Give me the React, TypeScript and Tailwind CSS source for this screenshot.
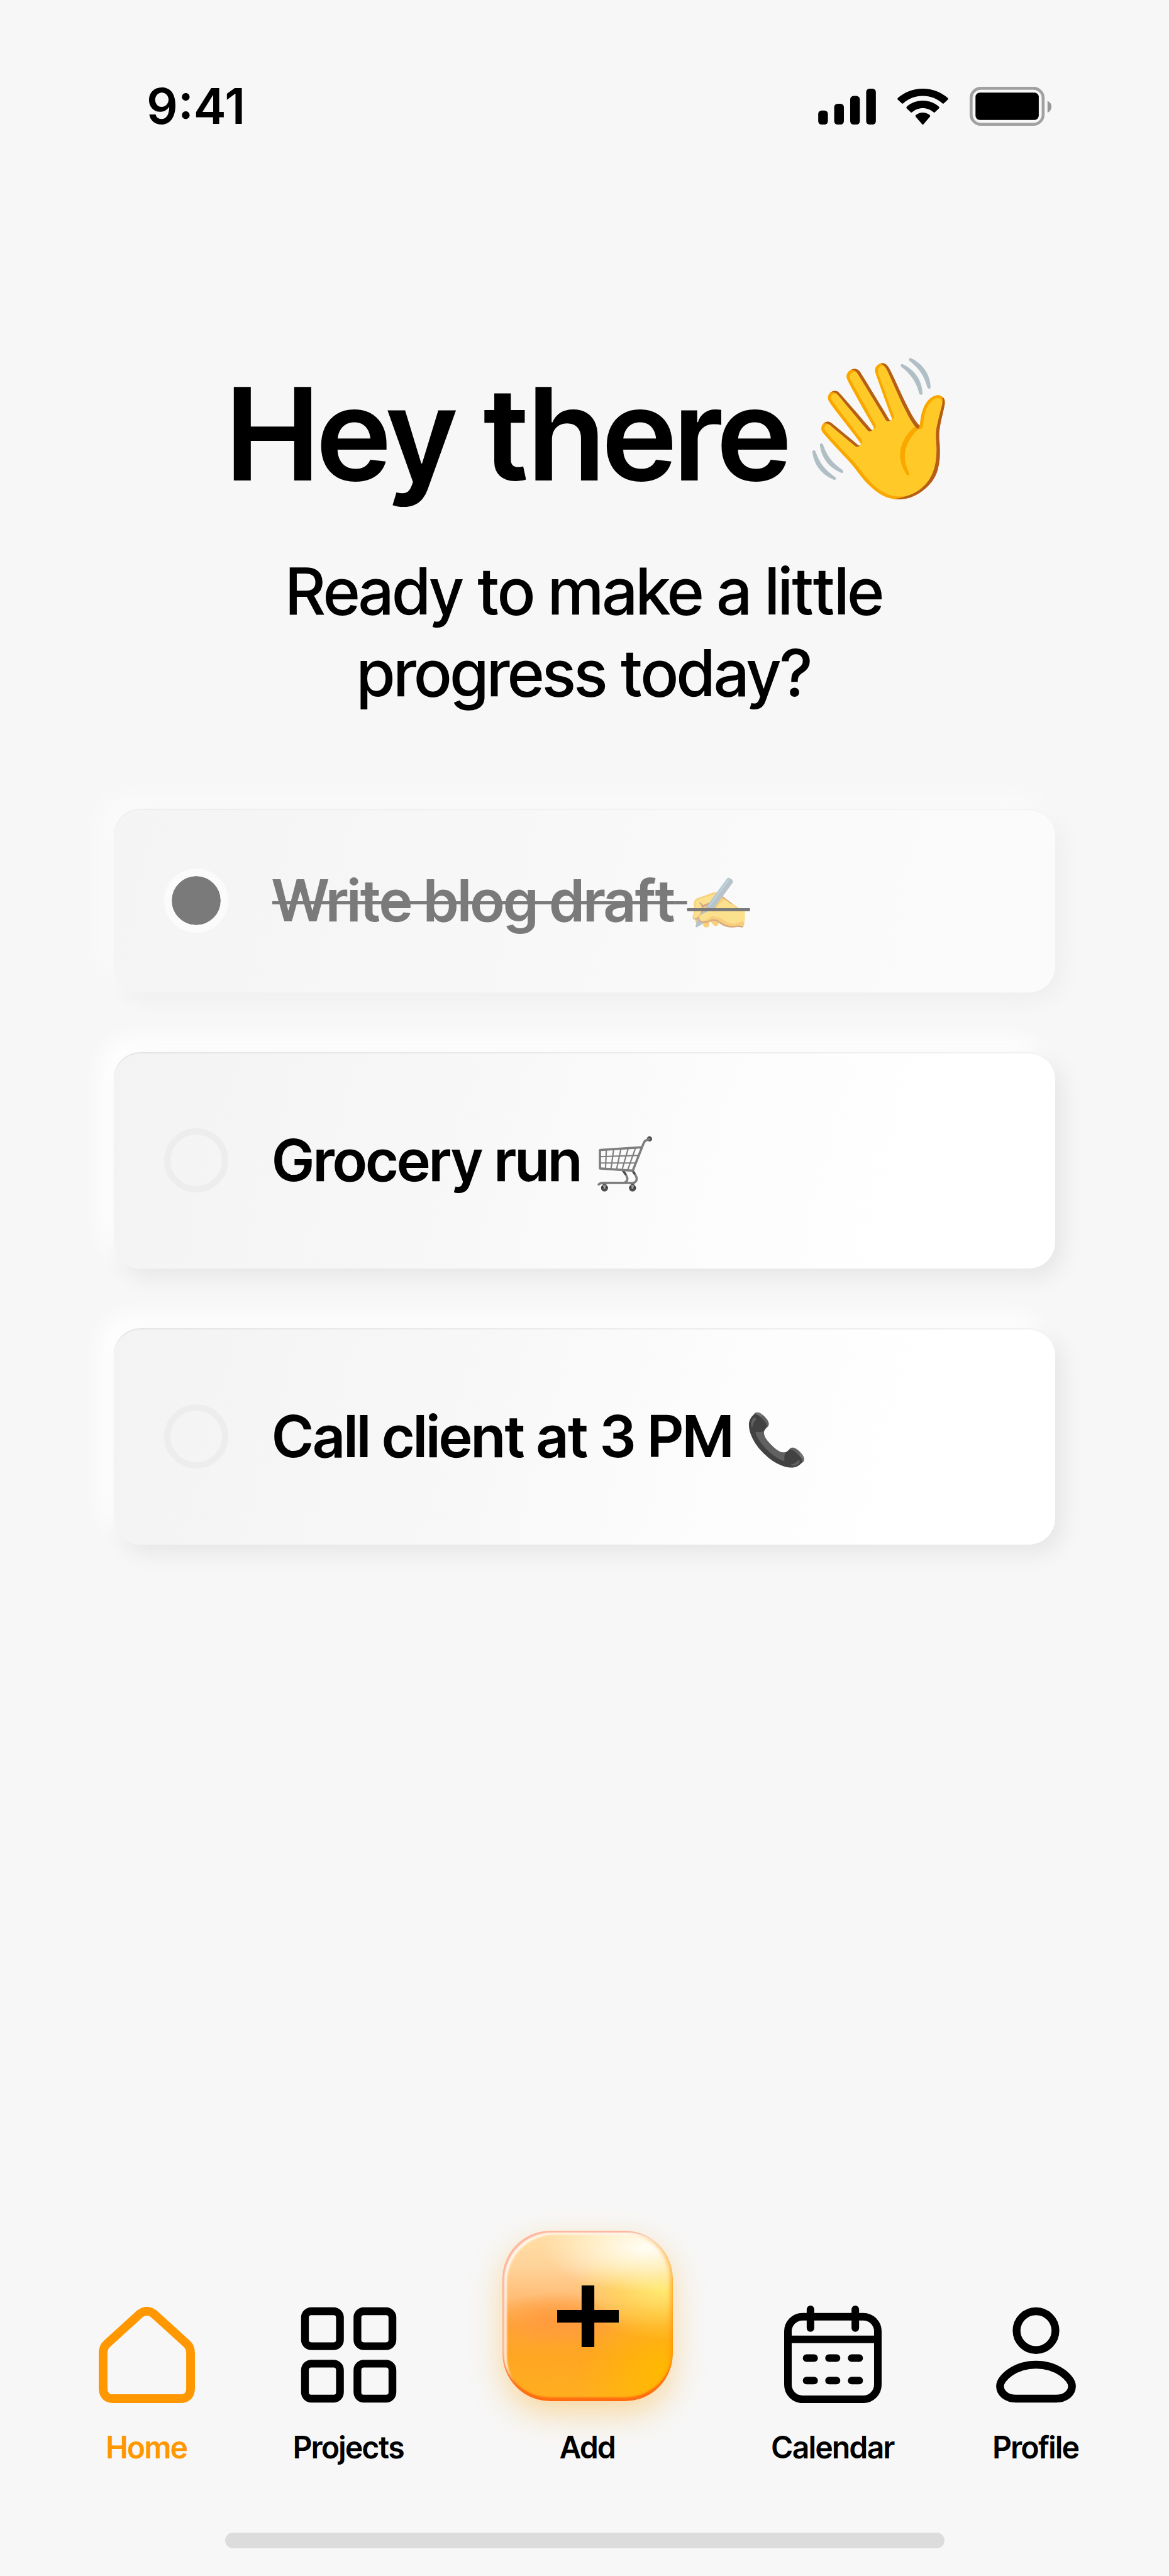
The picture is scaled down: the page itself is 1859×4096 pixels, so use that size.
import { useState } from 'react';
import type { ReactNode } from 'react';
import clsx from 'clsx';

type Task = {
  id: string;
  title: string;
  emoji: string;
  done: boolean;
  mono?: boolean;
};

const initialTasks: Task[] = [
  { id: 'blog', title: 'Write blog draft', emoji: '✍️', done: true },
  { id: 'grocery', title: 'Grocery run', emoji: '🛒', done: false, mono: true },
  { id: 'client', title: 'Call client at 3 PM', emoji: '📞', done: false },
];

const SignalIcon = () => (
  <svg viewBox="0 0 119 74" className="h-[57px] w-[92px]" fill="currentColor" aria-hidden="true">
    <rect x="0" y="45" width="20" height="29" rx="7" />
    <rect x="33" y="31" width="20" height="43" rx="7" />
    <rect x="66" y="15" width="20" height="59" rx="7" />
    <rect x="99" y="0" width="20" height="74" rx="7" />
  </svg>
);

const WifiIcon = () => (
  <svg viewBox="0 0 105 74" className="h-[57px] w-[81px]" fill="currentColor" aria-hidden="true">
    <path d="M52.5 0C32.5 0 14.5 7.3 1 19.3Q-.6 20.8 .9 22.6L9 30.2Q10.5 31.6 12.2 30.2C23 20.6 37 15 52.5 15S82 20.6 92.8 30.2Q94.5 31.6 96 30.2L104.1 22.6Q105.6 20.8 104 19.3C90.5 7.3 72.5 0 52.5 0Z" />
    <path d="M52.5 24.7C39.5 24.7 28 29.5 19.2 37.2Q17.6 38.8 19.1 40.6L27.2 48.5Q28.9 50 30.6 48.5C36.5 43.3 44 40.2 52.5 40.2S68.5 43.3 74.4 48.5Q76.1 50 77.8 48.5L85.9 40.6Q87.4 38.8 85.8 37.2C77 29.5 65.5 24.7 52.5 24.7Z" />
    <path d="M52.5 49.2C46.5 49.2 41.5 51.3 38 54.6Q36.5 56.3 38 58L51 73.2Q52.5 74.6 54 73.2L67 58Q68.5 56.3 67 54.6C63.5 51.3 58.5 49.2 52.5 49.2Z" />
  </svg>
);

const BatteryIcon = () => (
  <svg viewBox="0 0 168 80" className="h-[62px] w-[130px]" aria-hidden="true">
    <rect x="3" y="3" width="148" height="74" rx="20" fill="none" stroke="#a1a1a1" strokeWidth="6" />
    <rect x="12" y="12" width="130" height="56" rx="9" fill="#000" />
    <path d="M160 29C165 31 168 35 168 41S165 51 160 53Z" fill="#969696" />
  </svg>
);

const HomeIcon = () => (
  <svg viewBox="0 0 198 198" className="size-[153px]" fill="none" stroke="currentColor" strokeWidth="18" aria-hidden="true">
    <path d="M9 95Q9 83 17 76L85 14Q99 4 113 14L181 76Q189 83 189 95V167Q189 189 167 189H31Q9 189 9 167Z" />
  </svg>
);

const ProjectsIcon = () => (
  <svg viewBox="0 0 198 198" className="size-[153px]" fill="none" stroke="currentColor" strokeWidth="16" aria-hidden="true">
    <rect x="9" y="9" width="72" height="72" rx="13" />
    <rect x="117" y="9" width="72" height="72" rx="13" />
    <rect x="9" y="117" width="72" height="72" rx="13" />
    <rect x="117" y="117" width="72" height="72" rx="13" />
  </svg>
);

const CalendarIcon = () => (
  <svg viewBox="0 0 200 200" className="size-[155px]" fill="none" stroke="currentColor" strokeWidth="15.5" strokeLinecap="round" aria-hidden="true">
    <rect x="7.75" y="22.75" width="184.5" height="169.5" rx="30" />
    <path d="M8 69.5H192" />
    <path d="M54 7.75V46M146 7.75V46" />
    <path d="M46 107.75H61.5M92 107.75H107.5M138.5 107.75H154" />
    <path d="M46 154H61.5M92 154H107.5M138.5 154H154" />
  </svg>
);

const ProfileIcon = () => (
  <svg viewBox="0 0 164 198" className="h-[153px] w-[127px]" fill="none" stroke="currentColor" strokeWidth="16" aria-hidden="true">
    <circle cx="82" cy="49" r="40" />
    <path d="M82 119C38 119 8 147 8 163C8 178 22 189 41 189H123C142 189 156 178 156 163C156 147 126 119 82 119Z" />
  </svg>
);

const PlusIcon = () => (
  <svg viewBox="0 0 126 126" className="size-[98px]" stroke="#000" strokeWidth="26" aria-hidden="true">
    <path d="M0 63H126M63 0V126" />
  </svg>
);

const NavItem = ({ label, icon, active }: { label: string; icon: ReactNode; active?: boolean }) => (
  <a
    href={`#${label.toLowerCase()}`}
    aria-current={active ? 'page' : undefined}
    className={clsx('flex flex-col items-center gap-[43px]', active ? 'text-[#ff9800]' : 'text-black')}
  >
    {icon}
    <span className="text-[48px] leading-[56px] font-semibold">{label}</span>
  </a>
);

export default function App() {
  const [tasks, setTasks] = useState(initialTasks);

  const toggle = (id: string) => {
    setTasks(tasks.map(t => (t.id === id ? { ...t, done: !t.done } : t)));
  };

  return (
    <div className="flex min-h-screen flex-col bg-[#f7f7f7] font-['Inter_Tight','Inter',sans-serif] text-black">
      {/* Status bar */}
      <header className="flex items-center justify-between pt-[119px] pr-[187px] pl-[233px]">
        <time className="font-['Inter',sans-serif] text-[78px] leading-[100px] font-semibold">9:41</time>
        <div className="flex items-center gap-[34px]">
          <SignalIcon />
          <WifiIcon />
          <BatteryIcon />
        </div>
      </header>

      <main className="flex flex-col pt-[345px]">
        <h1 className="flex items-start justify-center gap-[12px] pl-[40px] text-[205px] leading-[250px] font-semibold">
          Hey there
          <span className="text-[217px] leading-[230px]">👋</span>
        </h1>
        <p className="mt-[61px] text-center text-[102px] leading-[130px] font-medium">
          Ready to make a little
          <br />
          progress today?
        </p>

        {/* Tasks */}
        <ul className="mt-[151px] flex flex-col gap-[95px] px-[181px]">
          {tasks.map(task => (
            <li
              key={task.id}
              className={clsx(
                'rounded-[42px] bg-linear-[105deg,#f3f3f3_0%,#f8f8f8_40%,#fcfcfc_62%,#ffffff_85%]',
                'shadow-[inset_0_2px_1px_rgba(0,0,0,0.06),12px_14px_36px_rgba(0,0,0,0.07),-20px_-20px_36px_#ffffff]',
                task.done && 'opacity-50',
              )}
            >
              <label
                htmlFor={task.id}
                className={clsx('flex items-center gap-[70px] px-[80px]', task.done ? 'py-[91px]' : 'py-[117px]')}
              >
                <input
                  id={task.id}
                  type="checkbox"
                  checked={task.done}
                  onChange={() => toggle(task.id)}
                  className="size-[102px] shrink-0 appearance-none rounded-full border-[10px] border-[#ededed] checked:border-[12px] checked:border-white checked:bg-black checked:bg-clip-padding"
                />
                <span className={clsx('text-[92px] leading-[110px] font-semibold', task.done && 'line-through decoration-[5px]')}>
                  {task.title}{' '}
                  <span className={clsx('text-[80px] leading-none', task.mono && 'brightness-75 grayscale')}>{task.emoji}</span>
                </span>
              </label>
            </li>
          ))}
        </ul>
      </main>

      {/* Bottom navigation */}
      <footer className="mt-auto flex flex-col items-center pb-[44px]">
        <nav className="flex w-full items-end justify-between pr-[143px] pl-[157px]">
          <NavItem label="Home" icon={<HomeIcon />} active />
          <NavItem label="Projects" icon={<ProjectsIcon />} />
          <button type="button" className="flex flex-col items-center gap-[46px]">
            <span className="flex size-[271px] items-center justify-center rounded-[76px] bg-[radial-gradient(ellipse_60%_26%_at_84%_10%,#fffef6_0%,#fff8dcb0_50%,#fff3c000_100%),radial-gradient(ellipse_52%_30%_at_94%_34%,#ffea70_0%,#ffdf4f90_50%,#ffd83a00_100%),radial-gradient(ellipse_40%_16%_at_32%_52%,#ff9a3e_0%,#ff9a3e00_100%),radial-gradient(ellipse_50%_50%_at_95%_85%,#ffba00_0%,#ffb90000_100%),linear-gradient(180deg,#ffe0a8_0%,#ffd298_22%,#ffbc74_40%,#ffa436_56%,#ffa522_74%,#ffb01f_100%)] shadow-[inset_0_-7px_3px_-1px_#ff6c12,inset_3px_3px_2px_#ffb69c,inset_7px_6px_3px_#ffffffd0,inset_-4px_0_6px_#ff8f0090,0_20px_50px_rgba(250,175,40,0.42)]">
              <PlusIcon />
            </span>
            <span className="text-[48px] leading-[56px] font-semibold">Add</span>
          </button>
          <NavItem label="Calendar" icon={<CalendarIcon />} />
          <NavItem label="Profile" icon={<ProfileIcon />} />
        </nav>
        <div className="mt-[107px] h-[25px] w-8/13 rounded-full bg-[#dcdcdc]" />
      </footer>
    </div>
  );
}
